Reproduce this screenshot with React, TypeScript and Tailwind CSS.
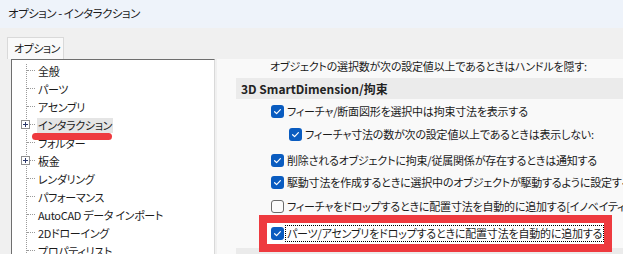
import React from "react";

const JP = { fontFamily: '"Noto Sans CJK JP", "Noto Sans", sans-serif' };

function CheckBox({ checked }: { checked: boolean }) {
  if (!checked) {
    return (
      <span className="inline-block w-[13px] h-[13px] rounded-[3px] border border-[#6b6b6b] bg-[#fbfbfb] shrink-0" />
    );
  }
  return (
    <span className="inline-flex items-center justify-center w-[13px] h-[13px] rounded-[3px] bg-[#0a5cc0] shrink-0">
      <svg width="9" height="9" viewBox="0 0 9 9">
        <path d="M1.6 4.7 L3.6 6.6 L7.4 2.6" fill="none" stroke="#fff" strokeWidth="1.2" strokeLinecap="round" strokeLinejoin="round" />
      </svg>
    </span>
  );
}

function PlusBox() {
  return (
    <span className="absolute left-[9px] top-[4px] w-[9px] h-[9px] border border-[#8f8f8f] bg-white flex items-center justify-center">
      <svg width="7" height="7" viewBox="0 0 7 7">
        <path d="M1 3.5 H6 M3.5 1 V6" stroke="#2d3a6b" strokeWidth="1" />
      </svg>
    </span>
  );
}

const treeItems: { label: string; plus?: boolean; selected?: boolean }[] = [
  { label: "全般" },
  { label: "パーツ" },
  { label: "アセンブリ" },
  { label: "インタラクション", plus: true, selected: true },
  { label: "フォルダー" },
  { label: "板金", plus: true },
  { label: "レンダリング" },
  { label: "パフォーマンス" },
  { label: "AutoCAD データ インポート" },
  { label: "2Dドローイング" },
  { label: "プロパティリスト" },
];

function Row({
  checked,
  indent,
  mt,
  focus,
  children,
}: {
  checked: boolean;
  indent?: boolean;
  mt: string;
  focus?: boolean;
  children: React.ReactNode;
}) {
  return (
    <div
      className={`shrink-0 flex items-center h-[18px] gap-[3px] whitespace-nowrap ${mt} ${indent ? "pl-[72px]" : "pl-[54px]"} ${focus ? "relative z-10" : ""}`}
    >
      <CheckBox checked={checked} />
      <span className={`leading-[15px] ${focus ? "outline outline-1 outline-dotted outline-black px-[1px] ml-[-1px]" : ""}`}>
        {children}
      </span>
    </div>
  );
}

export default function App() {
  return (
    <div
      className="relative w-[623px] h-[254px] overflow-hidden bg-[#f0f0f0] text-[11px] tracking-[-0.2px] text-[#1b1b1b] [font-feature-settings:'palt']"
      style={JP}
    >
      {/* Title bar */}
      <div className="h-[28px] bg-[#eef3fa] flex items-center pl-[8px] text-[11.5px] tracking-[-0.5px] text-[#1a1a1a] whitespace-pre">
        オプション - インタラクション
      </div>

      {/* Tab strip */}
      <div className="pt-[9px] pl-[7px] flex">
        <div className="h-[22px] w-[57px] pl-[6px] flex items-center bg-[#f9f9f9] border border-b-0 border-[#d9d9d9] text-[11px] tracking-[-0.5px] whitespace-nowrap">
          オプション
        </div>
      </div>

      {/* Panel */}
      <div className="flex h-[200px] ml-[7px] bg-[#f0f0f0]">
        {/* Tree */}
        <div className="relative shrink-0 ml-[4px] w-[204px] h-full bg-white border-t border-l border-[#6e6e6e] border-r border-r-[#d9d9d9] pt-[2px] tracking-[-0.3px]">
          <div className="absolute left-[14px] top-[4px] bottom-0 border-l border-dotted border-[#9a9a9a]" />
          {treeItems.map((it) => (
            <div key={it.label} className="relative h-[18px] flex items-center pl-[25px] whitespace-nowrap">
              <span className="absolute left-[15px] top-[8px] w-[8px] border-t border-dotted border-[#9a9a9a]" />
              {it.plus && <PlusBox />}
              <span className={`leading-[15px] px-[1px] ${it.selected ? "bg-[#e5e5e5]" : ""}`}>{it.label}</span>
            </div>
          ))}
          {/* red underline annotation */}
          <div className="absolute left-[20px] top-[73px] w-[80px] h-[7px] rounded-full bg-[#ee3a3f]" />
        </div>

        {/* Right pane */}
        <div className="ml-[2px] flex-1 min-w-0 h-full overflow-hidden bg-[#f9f9f9] flex flex-col">
          <div className="shrink-0 h-[14px] flex items-center pl-[53px] whitespace-nowrap leading-[14px]">
            オブジェクトの選択数が次の設定値以上であるときはハンドルを隠す:
          </div>
          <div className="shrink-0 mt-[5px] ml-[19px] h-[21px] bg-[#ebebeb] flex items-center pl-[5px] font-bold text-[12px] tracking-normal text-[#222]">
            3D SmartDimension/拘束
          </div>
          <Row checked mt="mt-[3px]">フィーチャ/断面図形を選択中は拘束寸法を表示する</Row>
          <Row checked indent mt="mt-[5px]">フィーチャ寸法の数が次の設定値以上であるときは表示しない:</Row>
          <Row checked mt="mt-[8px]">削除されるオブジェクトに拘束/従属関係が存在するときは通知する</Row>
          <Row checked mt="mt-[4px]">駆動寸法を作成するときに選択中のオブジェクトが駆動するように設定する</Row>
          <Row checked={false} mt="mt-[6px]">フィーチャをドロップするときに配置寸法を自動的に追加する[イノベイティブ]</Row>
          <Row checked mt="mt-[9px]" focus>パーツ/アセンブリをドロップするときに配置寸法を自動的に追加する</Row>
          <div className="shrink-0 mt-[6px] ml-[19px] h-[21px] bg-[#ebebeb]" />
        </div>
      </div>

      {/* red highlight box annotation */}
      <div className="absolute left-[259px] top-[215px] w-[353px] h-[37px] border-[8px] border-[#ee3a3f] bg-white" />
    </div>
  );
}
